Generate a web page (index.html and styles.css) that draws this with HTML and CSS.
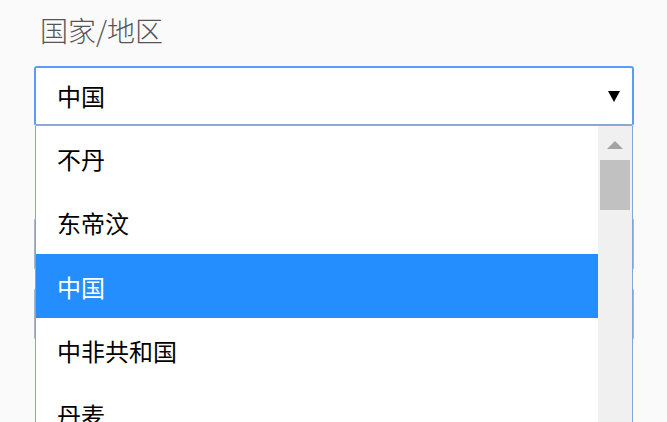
FILE: index.html
```html
<!DOCTYPE html>
<html lang="zh-CN">
<head>
<meta charset="utf-8">
<title>国家/地区</title>
<link rel="stylesheet" href="styles.css">
</head>
<body>
<div class="form">
  <div class="label">国家/地区</div>
  <div class="select">
    <span class="value">中国</span>
    <span class="caret"></span>
  </div>
  <div class="behind">
    <div class="field"></div>
    <div class="field"></div>
  </div>
  <div class="dropdown">
    <ul class="options">
      <li class="option">不丹</li>
      <li class="option">东帝汶</li>
      <li class="option selected">中国</li>
      <li class="option">中非共和国</li>
      <li class="option">丹麦</li>
    </ul>
    <div class="scrollbar">
      <div class="arrow-up"></div>
      <div class="thumb"></div>
    </div>
  </div>
</div>
</body>
</html>
```

FILE: styles.css
```css
html, body {
  margin: 0;
  padding: 0;
  background: #fafafa;
  height: 100%;
  overflow: hidden;
}
body {
  font-family: "Noto Sans CJK SC", "Noto Sans", sans-serif;
}
.form {
  position: relative;
  width: 600px;
  padding: 10px 0 0 34px;
}
.label {
  font-size: 28px;
  line-height: 40px;
  color: #555;
  padding-left: 6px;
  font-weight: 300;
}
.select {
  margin-top: 16px;
  box-sizing: border-box;
  height: 60px;
  border: 2px solid #5b9cf4;
  border-bottom-color: #8aa8d4;
  border-radius: 3px;
  background: #fff;
  display: flex;
  align-items: center;
  justify-content: space-between;
  padding: 0 12px 0 21px;
}
.value {
  font-size: 24px;
  color: #000;
  line-height: 1;
}
.caret {
  width: 0;
  height: 0;
  border-left: 6px solid transparent;
  border-right: 6px solid transparent;
  border-top: 11px solid #000;
}
.behind {
  margin-top: 92px;
  display: flex;
  flex-direction: column;
  gap: 18px;
}
.field {
  height: 52px;
  box-sizing: border-box;
  border: 2px solid #a8b4c4;
  border-radius: 3px;
  background: #fff;
}
.dropdown {
  position: absolute;
  top: 126px;
  left: 35px;
  width: 598px;
  height: 320px;
  box-sizing: border-box;
  border-left: 1px solid #7fa6de;
  border-right: 1px solid #7fa6de;
  background: #fff;
  display: flex;
}
.options {
  list-style: none;
  margin: 0;
  padding: 0;
  flex: 1;
}
.option {
  height: 64px;
  display: flex;
  align-items: center;
  padding-left: 21px;
  font-size: 24px;
  color: #000;
}
.option.selected {
  background: #248efe;
  color: #fff;
}
.scrollbar {
  width: 34px;
  background: #f0f0f0;
  display: flex;
  flex-direction: column;
  align-items: center;
}
.arrow-up {
  margin-top: 15px;
  width: 0;
  height: 0;
  border-left: 8px solid transparent;
  border-right: 8px solid transparent;
  border-bottom: 8px solid #a3a3a3;
}
.thumb {
  margin-top: 11px;
  width: 30px;
  height: 50px;
  background: #c1c1c1;
}
```
